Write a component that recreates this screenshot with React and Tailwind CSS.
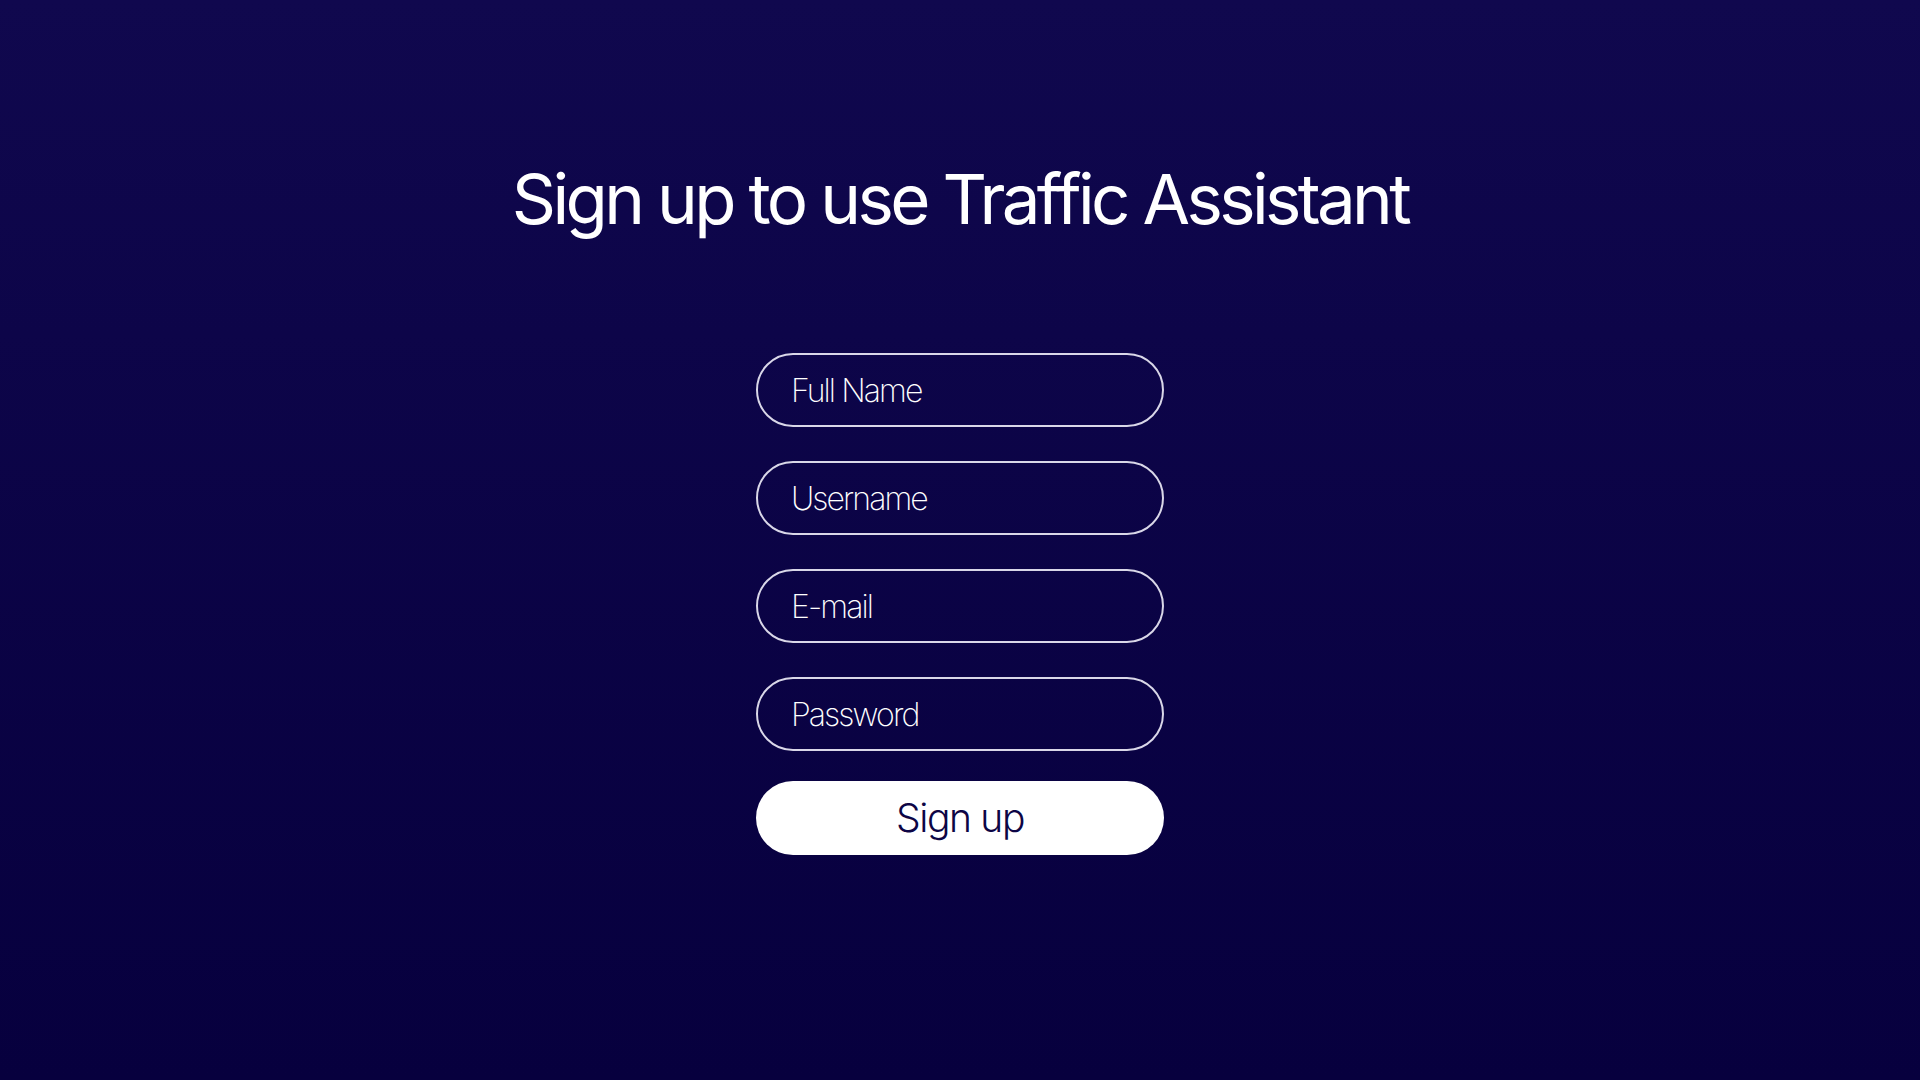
import React from 'react';

const Field = ({ placeholder, type = 'text' }) => (
  <input
    type={type}
    placeholder={placeholder}
    className="w-[408px] h-[74px] rounded-full border-2 border-[#d9d7e8] bg-transparent pl-[33px] pr-6 text-[32px] font-extralight tracking-[-0.06em] text-white placeholder:text-white outline-none"
  />
);

export default function App() {
  return (
    <div
      className="min-h-screen w-full flex flex-col items-center bg-gradient-to-b from-[#10084e] to-[#07003e] text-white"
      style={{ fontFamily: 'Inter, "Noto Sans", sans-serif' }}
    >
      <h1 className="mt-[165px] text-[69px] leading-none font-normal tracking-[-0.053em]">
        Sign up to use Traffic Assistant
      </h1>
      <form className="mt-[119px] flex flex-col items-center">
        <div className="flex flex-col gap-[34px]">
          <Field placeholder="Full Name" />
          <Field placeholder="Username" />
          <Field placeholder="E-mail" type="email" />
          <Field placeholder="Password" type="password" />
        </div>
        <button
          type="button"
          className="mt-[30px] w-[408px] h-[74px] rounded-full bg-white text-[39px] font-light tracking-[-0.035em] text-[#0d0545]"
        >
          Sign up
        </button>
      </form>
    </div>
  );
}
